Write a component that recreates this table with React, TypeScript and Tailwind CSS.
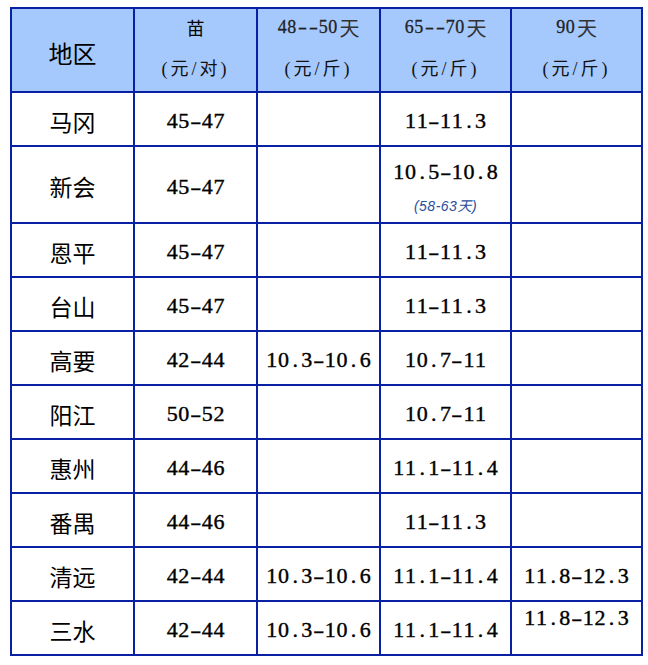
const serif = "font-['Liberation_Serif','Noto_Sans_CJK_SC',serif]";
const cjk = "font-['Noto_Sans_CJK_SC',sans-serif]";

const rows = [
  ["马冈", "45-47", "", "11-11.3", ""],
  ["新会", "45-47", "", "10.5-10.8", ""],
  ["恩平", "45-47", "", "11-11.3", ""],
  ["台山", "45-47", "", "11-11.3", ""],
  ["高要", "42-44", "10.3-10.6", "10.7-11", ""],
  ["阳江", "50-52", "", "10.7-11", ""],
  ["惠州", "44-46", "", "11.1-11.4", ""],
  ["番禺", "44-46", "", "11-11.3", ""],
  ["清远", "42-44", "10.3-10.6", "11.1-11.4", "11.8-12.3"],
  ["三水", "42-44", "10.3-10.6", "11.1-11.4", "11.8-12.3"],
];

// fixed-width characters, like the half-width cells of the original sheet
function Num({ v }: { v: string }) {
  return (
    <span className={"inline-flex text-[22px] leading-[30px] text-black [-webkit-text-stroke:0.4px_black] " + serif}>
      {v.split("").map((c, i) => (
        <span
          key={i}
          className={
            "inline-block w-[11.7px] text-center" + (c === "-" ? " scale-x-150" : "")
          }
        >
          {c}
        </span>
      ))}
    </span>
  );
}

function HeadNum({ v }: { v: string }) {
  return (
    <span className="inline-flex items-center h-[37px] text-[#222]">
      {v.split("").map((c, i) =>
        c === "天" ? (
          <span key={i} className={"ml-[2px] text-[20px] text-[#333] " + cjk}>
            {c}
          </span>
        ) : (
          <span
            key={i}
            className={
              "inline-block text-center text-[18px] [-webkit-text-stroke:0.3px_#222] " +
              serif +
              (c === "-" ? " w-[11px] scale-x-150" : " w-[9.5px]")
            }
          >
            {c}
          </span>
        )
      )}
    </span>
  );
}

function Unit({ v }: { v: string }) {
  return (
    <span className={"h-[37px] leading-[37px] text-[18px] tracking-[3px] text-[#111] " + serif}>
      {v}
    </span>
  );
}

function App() {
  return (
    <div className="w-[648px] h-[665px] bg-white pt-[7px] pl-[10px]">
      <div className="grid w-fit grid-cols-[121px_121px_121px_129px_129px] grid-rows-[82px_52px_75px_repeat(8,52px)] gap-[2px] p-[2px] bg-[#0820a4]">
        <div className="bg-[#a6c9fd] flex items-center justify-center pt-[5px]">
          <span className={"text-[24px] text-black " + cjk}>地区</span>
        </div>
        <div className="bg-[#a6c9fd] flex flex-col items-center gap-[5px]">
          <span className={"h-[37px] leading-[37px] text-[18px] text-black " + cjk}>苗</span>
          <Unit v="(元/对)" />
        </div>
        <div className="bg-[#a6c9fd] flex flex-col items-center gap-[5px]">
          <HeadNum v="48--50天" />
          <Unit v="(元/斤)" />
        </div>
        <div className="bg-[#a6c9fd] flex flex-col items-center gap-[5px]">
          <HeadNum v="65--70天" />
          <Unit v="(元/斤)" />
        </div>
        <div className="bg-[#a6c9fd] flex flex-col items-center gap-[5px]">
          <HeadNum v="90天" />
          <Unit v="(元/斤)" />
        </div>

        {rows.map((r, ri) => (
          <>
            <div key={ri + "a"} className="bg-white flex items-center justify-center pt-[4px]">
              <span className={"text-[23px] text-black " + cjk}>{r[0]}</span>
            </div>
            <div key={ri + "b"} className="bg-white flex items-center justify-center pt-[4px]">
              <Num v={r[1]} />
            </div>
            <div key={ri + "c"} className="bg-white flex items-center justify-center pt-[4px]">
              {r[2] && <Num v={r[2]} />}
            </div>
            {ri === 1 ? (
              <div key={ri + "d"} className="bg-white flex flex-col items-center pt-[10px]">
                <Num v={r[3]} />
                <span className="mt-[9px] text-[14px] italic text-[#2c4c9c] tracking-[0.5px] font-['Liberation_Sans','Noto_Sans_CJK_SC',sans-serif]">
                  (58-63天)
                </span>
              </div>
            ) : (
              <div key={ri + "d"} className="bg-white flex items-center justify-center pt-[4px]">
                <Num v={r[3]} />
              </div>
            )}
            {ri === 9 ? (
              <div key={ri + "e"} className="bg-white flex justify-center pt-[1px]">
                <Num v={r[4]} />
              </div>
            ) : (
              <div key={ri + "e"} className="bg-white flex items-center justify-center pt-[4px]">
                {r[4] && <Num v={r[4]} />}
              </div>
            )}
          </>
        ))}
      </div>
    </div>
  );
}

export default App;
